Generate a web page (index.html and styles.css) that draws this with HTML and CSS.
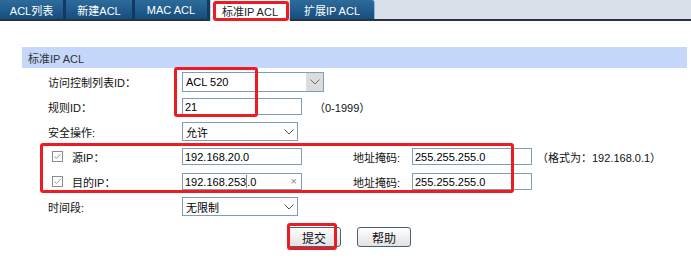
FILE: index.html
```html
<!DOCTYPE html>
<html lang="zh-CN">
<head>
<meta charset="utf-8">
<title>标准IP ACL</title>
<link rel="stylesheet" href="styles.css">
</head>
<body>
<div class="tabbar">
  <div class="tab t1">ACL列表</div>
  <div class="tab t2">新建ACL</div>
  <div class="tab t3">MAC ACL</div>
  <div class="tab active">标准IP ACL</div>
  <div class="tab t5">扩展IP ACL</div>
</div>

<div class="section">
  <div class="section-head">标准IP ACL</div>
  <div class="form">
    <div class="row r1">
      <div class="label">访问控制列表ID：</div>
      <div class="select wide hot"><span class="val">ACL 520</span><span class="arrow"><svg width="10" height="6" viewBox="0 0 10 6"><path d="M0.5 0.5 L5 5 L9.5 0.5" fill="none" stroke="#6b6b6b" stroke-width="1"/></svg></span></div>
    </div>
    <div class="row">
      <div class="label">规则ID：</div>
      <div class="input">21</div>
      <div class="hint range">（0-1999）</div>
    </div>
    <div class="row">
      <div class="label">安全操作:</div>
      <div class="select"><span class="val">允许</span><span class="arrow"><svg width="10" height="6" viewBox="0 0 10 6"><path d="M0.5 0.5 L5 5 L9.5 0.5" fill="none" stroke="#555" stroke-width="1"/></svg></span></div>
    </div>
    <div class="row">
      <div class="label chk"><span class="box"><svg width="11" height="11" viewBox="0 0 11 11"><rect x="0.5" y="0.5" width="10" height="10" fill="#fff" stroke="#8c8c8c"/><path d="M2.5 5.5 L4.5 7.5 L8.5 3" fill="none" stroke="#9a9a9a" stroke-width="1"/></svg></span>源IP：</div>
      <div class="input">192.168.20.0</div>
      <div class="label mask">地址掩码:</div>
      <div class="input">255.255.255.0</div>
      <div class="hint fmt">（格式为：192.168.0.1）</div>
    </div>
    <div class="row">
      <div class="label chk"><span class="box"><svg width="11" height="11" viewBox="0 0 11 11"><rect x="0.5" y="0.5" width="10" height="10" fill="#fff" stroke="#8c8c8c"/><path d="M2.5 5.5 L4.5 7.5 L8.5 3" fill="none" stroke="#9a9a9a" stroke-width="1"/></svg></span>目的IP：</div>
      <div class="input focus">192.168.253<span class="caret"></span>.0<span class="clear">×</span></div>
      <div class="label mask">地址掩码:</div>
      <div class="input">255.255.255.0</div>
    </div>
    <div class="row">
      <div class="label">时间段:</div>
      <div class="select"><span class="val">无限制</span><span class="arrow"><svg width="10" height="6" viewBox="0 0 10 6"><path d="M0.5 0.5 L5 5 L9.5 0.5" fill="none" stroke="#555" stroke-width="1"/></svg></span></div>
    </div>
    <div class="buttons">
      <button class="btn">提交</button>
      <button class="btn">帮助</button>
    </div>
  </div>
</div>

<div class="mark m-tab"></div>
<div class="mark m-acl"></div>
<div class="mark m-ip"></div>
<div class="mark m-submit"></div>
</body>
</html>
```

FILE: styles.css
```css
* { box-sizing: border-box; }
html, body { margin: 0; padding: 0; background: #fff; }
body {
  width: 691px;
  height: 264px;
  overflow: hidden;
  position: relative;
  font-family: "Liberation Sans", "Noto Sans CJK SC", Arial, sans-serif;
  font-size: 11px;
  color: #111;
}

/* tab bar */
.tabbar {
  display: flex;
  height: 21px;
  background: #d9e0ea;
  border-bottom: 2px solid #27333f;
}
.tab {
  height: 19px;
  display: flex;
  align-items: center;
  justify-content: center;
  color: #fff;
  font-size: 11px;
  background: linear-gradient(#2d6b9b, #164e7e);
  border-right: 3px solid #0f3b62;
}
.t1 { width: 66px; }
.t2 { width: 69px; }
.t3 { width: 75px; }
.t5 { width: 85px; border-right: 1px solid #8fb3d3; border-radius: 0 3px 0 0; }
.tab.active {
  width: 80px;
  height: 21px;
  margin-bottom: -2px;
  background: #fff;
  color: #222;
  border-left: 1px solid #c9d1da;
  border-right: 1px solid #c9d1da;
  position: relative;
}

/* section */
.section {
  margin: 26px 0 0 22px;
  width: 665px;
}
.section-head {
  height: 21px;
  background: #c5d8fc;
  padding-left: 6px;
  display: flex;
  align-items: center;
  color: #333;
}
.form {
  padding-top: 1px;
  padding-left: 26px;
}
.row {
  height: 25px;
  display: flex;
  align-items: center;
}
.label {
  width: 134px;
  display: flex;
  align-items: center;
  color: #111;
}
.label.chk { padding-left: 4px; }
.box { width: 11px; height: 11px; margin-right: 9px; display: flex; }
.label.mask { width: 59px; margin-left: 51px; }

.input {
  width: 120px;
  height: 17px;
  border: 1px solid #7f9db9;
  padding-left: 2px;
  display: flex;
  align-items: center;
  position: relative;
  color: #000;
}
.caret { display: inline-block; width: 1px; height: 13px; background: #888; }
.clear {
  position: absolute;
  right: 4px;
  top: 1px;
  color: #888;
  font-size: 11px;
}

.select {
  width: 116px;
  height: 19px;
  border: 1px solid #7f9db9;
  display: flex;
  align-items: center;
  justify-content: space-between;
  padding-left: 3px;
  color: #000;
}
.select.wide { width: 142px; height: 20px; }
.arrow {
  width: 17px;
  height: 100%;
  display: flex;
  align-items: center;
  justify-content: center;
}
.hot .arrow { background: #dcdcdc; }

.hint { color: #111; }
.range { margin-left: 12px; }
.fmt { margin-left: 5px; }

.buttons {
  display: flex;
  gap: 16px;
  margin-top: 8px;
  padding-left: 239px;
}
.btn {
  width: 54px;
  height: 20px;
  padding: 0;
  font-family: "Liberation Sans", "Noto Sans CJK SC", Arial, sans-serif;
  font-size: 12px;
  color: #111;
  background: linear-gradient(#ffffff, #e2e2e2);
  border: 1px solid #4a6178;
  border-radius: 3px;
}

/* red annotation boxes */
.mark {
  position: absolute;
  border: 3px solid #ec1c24;
  border-radius: 3px;
}
.m-tab { left: 213px; top: 1px; width: 76px; height: 20px; }
.m-acl { left: 174px; top: 67px; width: 84px; height: 50px; }
.m-ip { left: 40px; top: 143px; width: 474px; height: 50px; }
.m-submit { left: 287px; top: 223px; width: 50px; height: 27px; }
```
